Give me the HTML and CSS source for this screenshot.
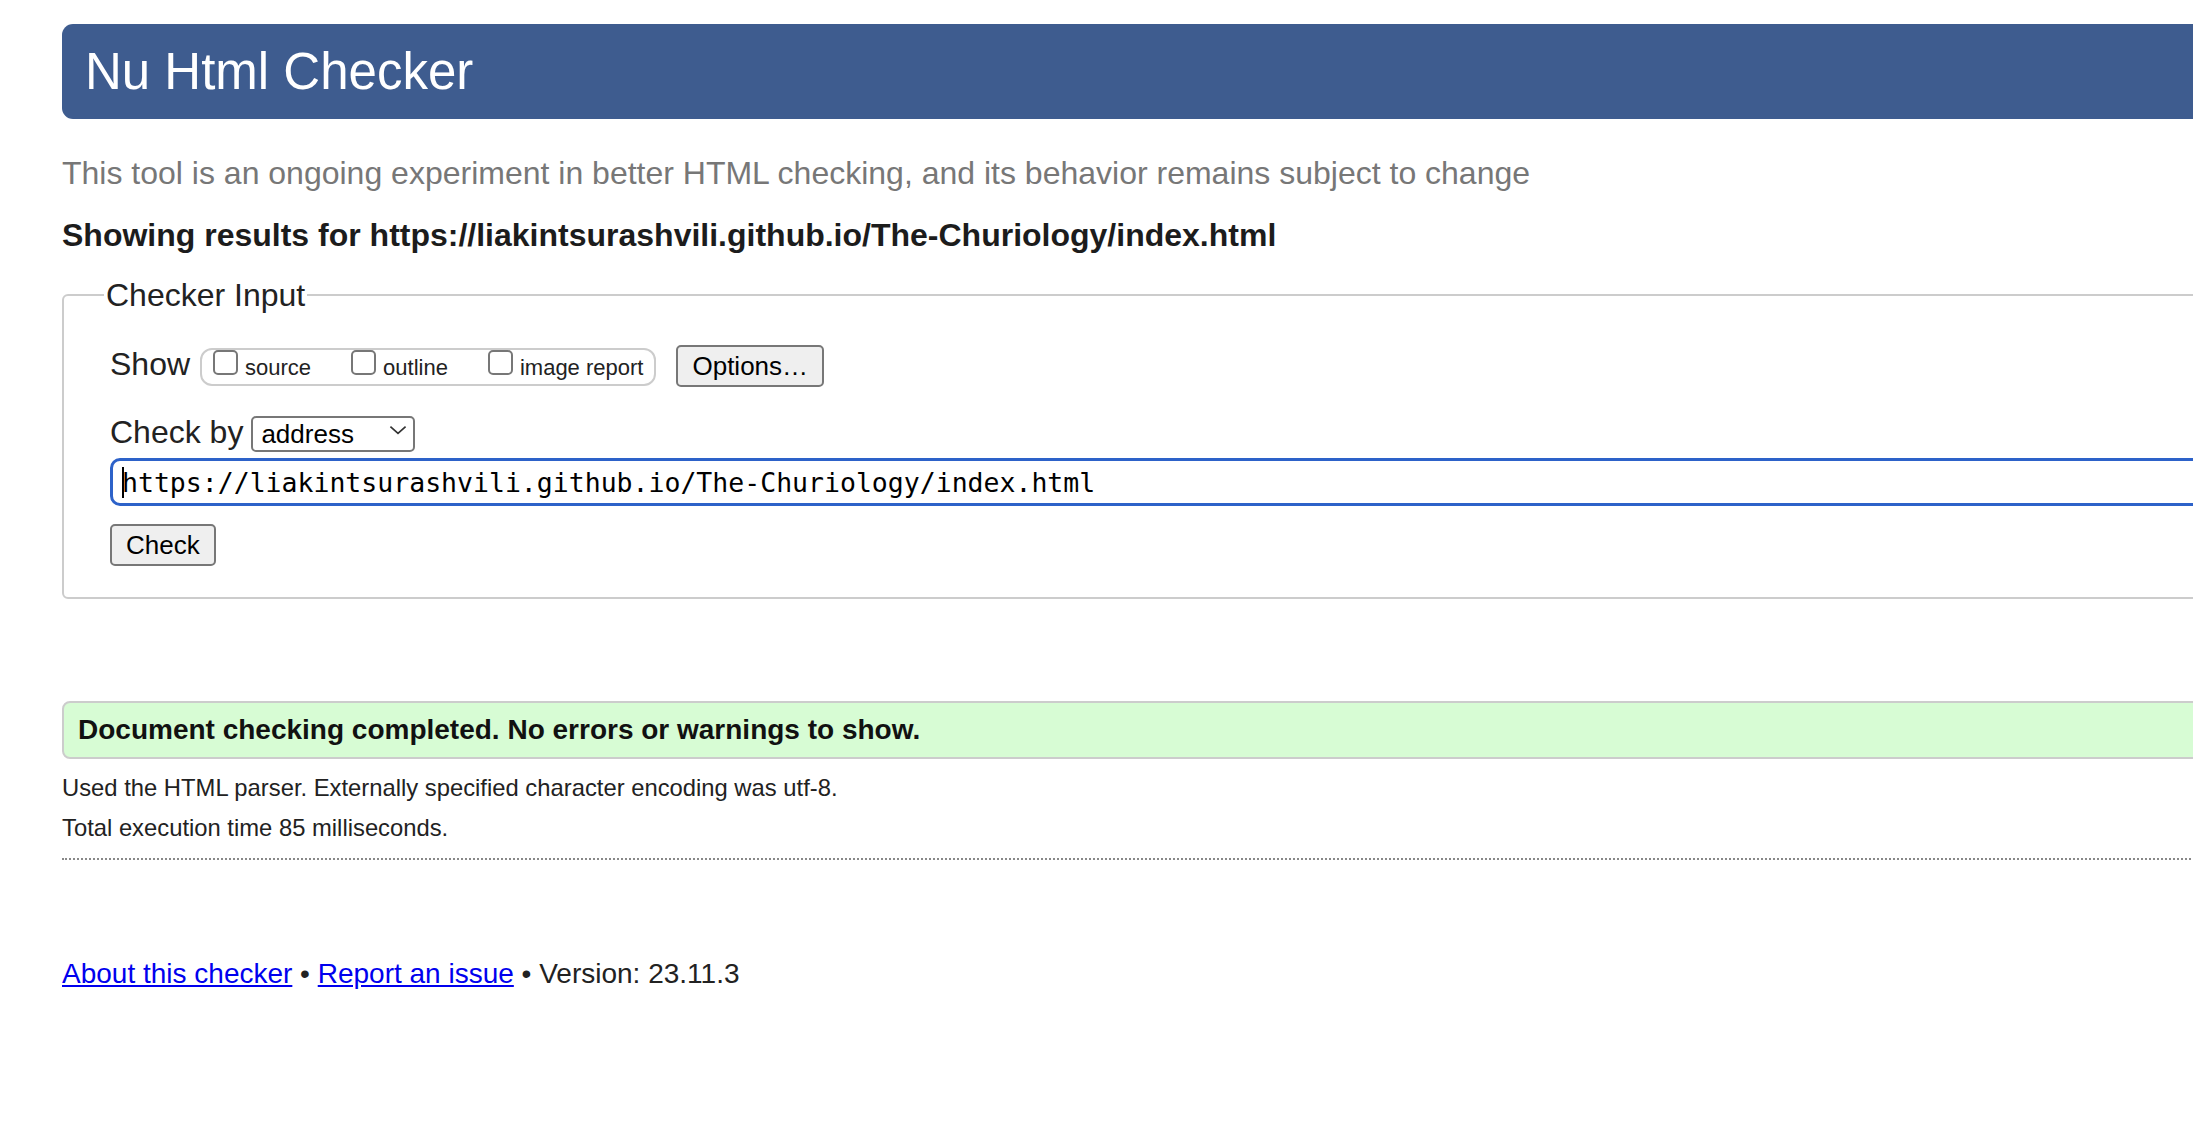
FILE: index.html
```html
<!DOCTYPE html>
<html lang="en">
<head>
<meta charset="utf-8">
<title>Showing results for https://liakintsurashvili.github.io/The-Churiology/index.html - Nu Html Checker</title>
<link rel="stylesheet" href="styles.css">
</head>
<body>
<div class="page">
  <h1 class="banner">Nu Html Checker</h1>
  <p class="tagline">This tool is an ongoing experiment in better HTML checking, and its behavior remains subject to change</p>
  <p class="showing">Showing results for https://liakintsurashvili.github.io/The-Churiology/index.html</p>
  <form class="checker">
    <fieldset class="input-set">
      <legend class="legend">Checker Input</legend>
      <div class="row show-row"><span class="row-label">Show</span><span class="toggles"><label class="toggle"><input type="checkbox" class="cb"><span>source</span></label><label class="toggle"><input type="checkbox" class="cb"><span>outline</span></label><label class="toggle"><input type="checkbox" class="cb"><span>image report</span></label></span><button type="button" class="btn btn-options">Options…</button></div>
      <div class="row by-row"><span class="row-label">Check by</span><span class="select-wrap"><select class="sel"><option>address</option></select><svg class="chev" viewBox="0 0 19 10" aria-hidden="true"><path d="M1.5 1.5 L9.5 8.5 L17.5 1.5" fill="none" stroke="#333" stroke-width="1.8"/></svg></span></div>
      <div class="url-wrap"><input class="url" type="text" value="https://liakintsurashvili.github.io/The-Churiology/index.html"><span class="caret"></span></div>
      <button type="button" class="btn btn-check">Check</button>
    </fieldset>
  </form>
  <p class="success">Document checking completed. No errors or warnings to show.</p>
  <div class="details">
    <p class="used">Used the HTML parser. Externally specified character encoding was utf-8.</p>
    <p class="total">Total execution time 85 milliseconds.</p>
  </div>
  <hr class="rule">
  <p class="footer"><a href="#">About this checker</a> • <a href="#">Report an issue</a> • Version: 23.11.3</p>
</div>
</body>
</html>
```
FILE: styles.css
```css
html, body {
  margin: 0;
  padding: 0;
  background: #fff;
  overflow: hidden;
}

body {
  font-family: "Liberation Sans", Arial, Helvetica, sans-serif;
  color: #222;
}

.page {
  width: 2400px;
  padding: 24px 0 40px 62px;
}

.banner {
  margin: 0;
  height: 95px;
  line-height: 95px;
  padding-left: 23px;
  background: #3e5c8f;
  color: #fff;
  font-size: 51px;
  font-weight: normal;
  border-radius: 11px;
}

.tagline {
  margin: 34px 0 0;
  font-size: 32px;
  line-height: 40px;
  color: #777;
}

.showing {
  margin: 22px 0 0;
  font-size: 32px;
  line-height: 40px;
  font-weight: bold;
  color: #1c1c1c;
}

.checker {
  margin: 20px 0 0;
}

.input-set {
  margin: 0;
  padding: 29px 0 31px 46px;
  border: 2px solid #ccc;
  border-radius: 6px;
  min-width: 0;
}

.legend {
  padding: 0 2px;
  margin-left: -6px;
  font-size: 32px;
  line-height: 40px;
}

.row {
  font-size: 32px;
  line-height: 40px;
  white-space: nowrap;
}

.by-row {
  margin-top: 25px;
}

.toggles {
  display: inline-block;
  margin-left: 10px;
  padding: 0 11px;
  border: 2px solid #ccc;
  border-radius: 12px;
  font-size: 22px;
  line-height: 33px;
}

.toggle + .toggle {
  margin-left: 40px;
}

.cb {
  -webkit-appearance: none;
  appearance: none;
  display: inline-block;
  box-sizing: border-box;
  width: 25px;
  height: 25px;
  margin: 0 7px 0 0;
  border: 2px solid #777;
  border-radius: 5px;
  background: #fff;
  vertical-align: baseline;
}

.btn {
  font-family: inherit;
  font-size: 26px;
  line-height: 30px;
  padding: 4px 14px;
  border: 2px solid #777;
  border-radius: 5px;
  background: #efefef;
  color: #000;
}

.btn-options {
  margin-left: 20px;
  vertical-align: baseline;
}

.btn-check {
  display: block;
  margin: 18px 0 0;
}

.select-wrap {
  position: relative;
  display: inline-block;
  margin-left: 8px;
}

.sel {
  -webkit-appearance: none;
  appearance: none;
  box-sizing: border-box;
  width: 164px;
  height: 36px;
  border: 2px solid #777;
  border-radius: 5px;
  background: #fff;
  font-family: inherit;
  font-size: 26px;
  padding: 0 0 0 8px;
  color: #000;
}

.chev {
  position: absolute;
  right: 8px;
  top: 13px;
  width: 18px;
  height: 10px;
  pointer-events: none;
}

.url-wrap {
  position: relative;
  margin-top: 6px;
}

.url {
  display: block;
  box-sizing: border-box;
  width: 2300px;
  height: 48px;
  border: 3px solid #2d62c9;
  border-radius: 10px;
  padding: 0 9px;
  font-family: "DejaVu Sans Mono", monospace;
  font-size: 26.5px;
  color: #000;
  background: #fff;
  outline: none;
}

.caret {
  position: absolute;
  left: 12px;
  top: 9px;
  width: 2px;
  height: 31px;
  background: #000;
}

.success {
  margin: 102px 0 0;
  padding: 11px 14px;
  border: 2px solid #ccc;
  border-radius: 8px;
  background: #d7fcd4;
  font-size: 28px;
  line-height: 32px;
  font-weight: bold;
  color: #111;
}

.details p {
  margin: 0;
  font-size: 23.8px;
  line-height: 28px;
}

.details .used {
  margin-top: 15px;
}

.details .total {
  margin-top: 12px;
}

.rule {
  margin: 16px 0 0;
  height: 0;
  border: 0;
  border-top: 2px dotted #888;
}

.footer {
  margin: 98px 0 0;
  font-size: 28px;
  line-height: 32px;
}

.footer a {
  color: #00e;
}
```
